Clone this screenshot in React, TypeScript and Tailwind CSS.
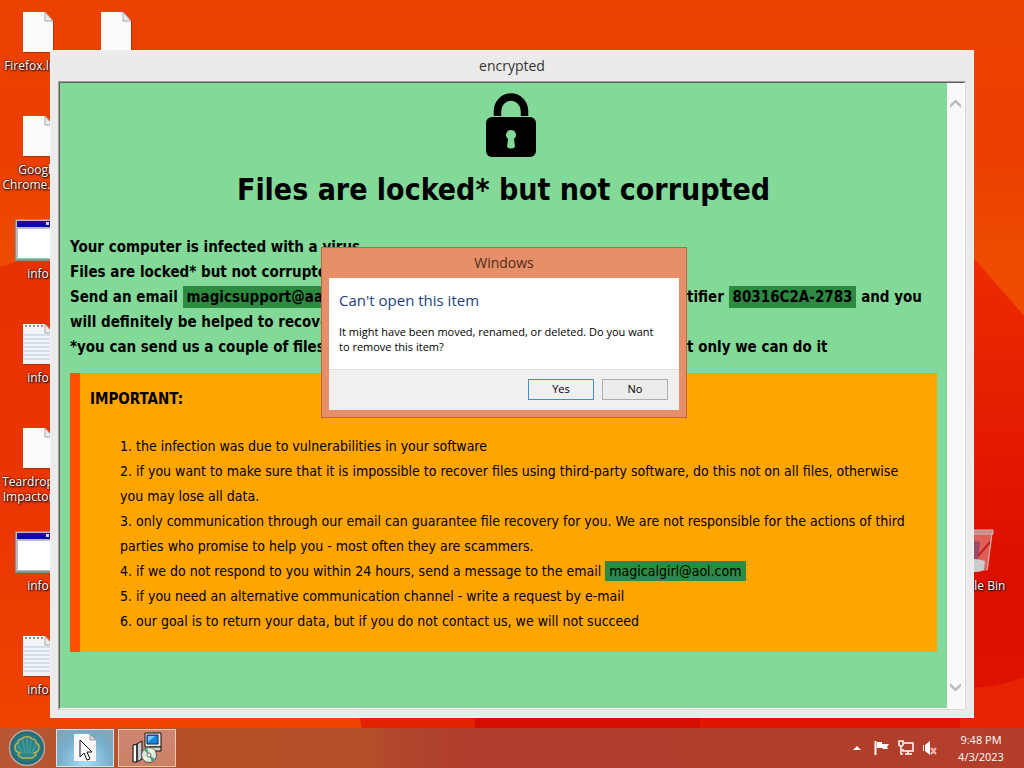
import { ReactNode } from 'react';

const rules = [
  'the infection was due to vulnerabilities in your software',
  'if you want to make sure that it is impossible to recover files using third-party software, do this not on all files, otherwise you may lose all data.',
  'only communication through our email can guarantee file recovery for you. We are not responsible for the actions of third parties who promise to help you - most often they are scammers.',
  'if we do not respond to you within 24 hours, send a message to the email',
  'if you need an alternative communication channel - write a request by e-mail',
  'our goal is to return your data, but if you do not contact us, we will not succeed',
];

function Wallpaper() {
  return (
    <svg className="absolute inset-0 h-full w-full" viewBox="0 0 1024 768" preserveAspectRatio="none" aria-hidden="true">
      <defs>
        <linearGradient id="sky" x1="0" y1="0" x2="0" y2="1">
          <stop offset="0" stopColor="#ec4200" />
          <stop offset="0.2" stopColor="#eb3e00" />
          <stop offset="0.35" stopColor="#ee4d00" />
          <stop offset="1" stopColor="#f04a00" />
        </linearGradient>
        <linearGradient id="fold" x1="0" y1="0" x2="0" y2="1">
          <stop offset="0" stopColor="#ee2c00" />
          <stop offset="0.6" stopColor="#dd1000" />
          <stop offset="1" stopColor="#dc1200" />
        </linearGradient>
        <linearGradient id="left" x1="0" y1="0" x2="0" y2="1">
          <stop offset="0" stopColor="#e63200" />
          <stop offset="0.5" stopColor="#ea3600" />
          <stop offset="1" stopColor="#f04600" />
        </linearGradient>
      </defs>
      <rect width="1024" height="768" fill="url(#sky)" />
      <path d="M0 267L60 245V718H200V768H0Z" fill="url(#left)" />
      <path d="M960 242L1024 316V768H960Z" fill="url(#fold)" />
      <path d="M198 710H358L370 768H192Z" fill="#ee4400" />
      <path d="M358 710H476L470 768H370Z" fill="#e32200" />
      <path d="M476 710H700V768H470Z" fill="#d40e00" />
      <path d="M700 710H960V768H700Z" fill="#e01600" />
      <path d="M960 687Q990 690 1024 677V768H960Z" fill="#e62200" />
    </svg>
  );
}

function FilePaper({ lined = false }: { lined?: boolean }) {
  return (
    <svg width="34" height="44" viewBox="0 0 34 44" aria-hidden="true">
      <path d="M3 3h22l8 9v31H3z" fill="#7a2400" opacity=".55" />
      <path d="M2 2h22l8 9v31H2z" fill={lined ? '#f1f5fa' : '#fbfbfb'} />
      <path d="M24 2v9h8z" fill="#ececec" stroke="#a8a8a8" strokeWidth="1" />
      {lined && <path d="M3 13h28M3 17h28M3 21h28M3 25h28M3 29h28M3 33h28M3 37h28" stroke="#b9cbdf" strokeWidth="1" />}
      {lined && <path d="M4 4h20" stroke="#8d9297" strokeWidth="2" strokeDasharray="2 2" />}
    </svg>
  );
}

function AppWindow() {
  return (
    <svg width="46" height="44" viewBox="0 0 46 44" aria-hidden="true">
      <path d="M0 1h46v42H0z" fill="#8d8d96" />
      <path d="M1 2h44v39H1z" fill="#b9bac2" />
      <path d="M2 3h42v6H2z" fill="#0a0ab0" />
      <path d="M31 4h3v3h-3z" fill="#d8d8e8" />
      <path d="M3 11h40v29H3z" fill="#fff" />
    </svg>
  );
}

function DesktopIcon({ label, children }: { label: string; children: ReactNode }) {
  return (
    <li className="flex h-[104px] w-[76px] flex-col items-center gap-1 pt-2.5 text-center text-xs leading-[15px] text-white [text-shadow:1px_1px_2px_#000,0_0_2px_#000]">
      {children}
      <span className="whitespace-pre">{label}</span>
    </li>
  );
}

function RecycleBin() {
  return (
    <svg width="44" height="46" viewBox="0 0 44 46" aria-hidden="true">
      <path d="M4 3h37l-5 39q-14 4-26 0z" fill="#e0a09c" opacity=".55" />
      <path d="M20 12l8 2-2 18-8 2z" fill="#6b3a78" opacity=".6" />
      <path d="M38 14L26 28" stroke="#c02020" strokeWidth="2" />
      <path d="M9 33q13-4 24 0l-1 9q-10 4-21 1z" fill="#c9ccca" />
      <path d="M3 2h38v4H3z" fill="#c98a88" stroke="#c4bcbc" />
      <path d="M40 5l-5 37" stroke="#eab0a8" />
    </svg>
  );
}

function Padlock() {
  return (
    <svg width="50" height="64" viewBox="0 0 50 64" role="img" aria-label="Locked">
      <path d="M11.500 23V18a13.500 14 0 0 1 27 0v5" fill="none" stroke="#000" strokeWidth="7.500" />
      <rect y="24" width="50" height="40" rx="6" />
      <path d="M25 37a5 5 0 0 1 3 9l1 8q-4 3-8 0l1-8a5 5 0 0 1 3-9z" fill="#82d998" />
    </svg>
  );
}

function Mark({ children }: { children: ReactNode }) {
  return <mark className="bg-[#2d8b41] px-1 py-0.5 text-black">{children}</mark>;
}

function NoteLine({ rest, children }: { rest?: ReactNode; children: ReactNode }) {
  return (
    <p className="flex whitespace-nowrap">
      <span className="w-[617px] shrink-0">{children}</span>
      {rest && <span>{rest}</span>}
    </p>
  );
}

function ScrollArrow({ down = false }: { down?: boolean }) {
  return (
    <button type="button" aria-label={down ? 'Scroll down' : 'Scroll up'}>
      <svg width="13" height="9" viewBox="0 0 13 9" aria-hidden="true">
        <path d={down ? 'M1 0l5.500 5L12 0v3.500L6.500 8.500 1 3.500z' : 'M1 9l5.500-5L12 9V5.500L6.500.5 1 5.500z'} fill="#bdbdbd" />
      </svg>
    </button>
  );
}

function EncryptedWindow() {
  return (
    <section className="absolute inset-x-[50px] top-[50px] flex flex-col border border-[#f5eeee] bg-[#ebebeb] px-[7px] pb-[7px]" aria-label="encrypted">
      <h2 className="h-[30px] text-center text-sm leading-[30px] text-[#333]">encrypted</h2>
      <div className="flex border border-t-[#a0a0a0] border-r-[#d8d8d8] border-b-[#d8d8d8] border-l-[#a0a0a0] bg-white">
        <div className="flex min-h-[627px] flex-1 border border-t-[#606060] border-r-white border-b-white border-l-[#606060] bg-[#82d998] font-['DejaVu_Sans_Condensed','DejaVu_Sans',sans-serif] leading-[25px] text-black">
          <div className="min-w-0 flex-1 px-2.5 pt-2.5">
            <div className="flex justify-center pl-[15px]"><Padlock /></div>
            <h1 className="pt-[13px] text-center text-[30px] leading-10 font-bold">Files are locked* but not corrupted</h1>
            <div className="mt-[25px] text-[15px] leading-[25px] font-bold">
              <NoteLine>Your computer is infected with a virus.</NoteLine>
              <NoteLine>Files are locked* but not corrupte</NoteLine>
              <NoteLine rest={<>tifier <Mark>80316C2A-2783</Mark> and you</>}>
                Send an email <Mark>magicsupport@aaa</Mark>
              </NoteLine>
              <NoteLine>will definitely be helped to recove</NoteLine>
              <NoteLine rest="t only we can do it">*you can send us a couple of files</NoteLine>
            </div>
            <div className="mt-[13px] border-l-10 border-[#ff4f00] bg-[#ffa500] pt-3.5 pb-[18px] pl-2.5">
              <p className="text-[15px] leading-[25px] font-bold">IMPORTANT:</p>
              <ol className="mt-[22px] list-inside list-decimal pr-3 pl-[30px] text-sm leading-[25px]">
                {rules.map((rule, i) => (
                  <li key={rule}>
                    {rule}
                    {i === 3 && <> <Mark>magicalgirl@aol.com</Mark></>}
                  </li>
                ))}
              </ol>
            </div>
          </div>
          <div className="flex w-[17px] flex-col items-center justify-between bg-[#f9f9f9] py-4">
            <ScrollArrow />
            <ScrollArrow down />
          </div>
        </div>
      </div>
    </section>
  );
}

function MissingItemDialog() {
  return (
    <section role="dialog" aria-label="Windows" className="absolute top-[247px] left-[321px] w-[366px] border border-[#bd6443] bg-[#e78f68] px-[7px] pb-[7px]">
      <h2 className="h-[30px] text-center text-sm leading-[30px] text-[#4f2c1c]">Windows</h2>
      <div className="bg-white px-2.5 pt-2.5 pb-3.5">
        <h3 className="text-[15px] leading-6 text-[#1c3f7c]">Can't open this item</h3>
        <p className="mt-3 pr-3 pb-px text-[11px] leading-[15px] text-black">It might have been moved, renamed, or deleted. Do you want to remove this item?</p>
      </div>
      <div className="flex justify-end gap-2 border-t border-[#dfdfdf] bg-[#f0f0f0] px-[11px] pt-[9px] pb-2.5 text-[11px] text-black">
        <button type="button" className="h-[21px] w-[66px] border border-[#3c8fdc] bg-[#f0f0f0]">Yes</button>
        <button type="button" className="h-[21px] w-[66px] border border-[#acacac] bg-[#ececec]">No</button>
      </div>
    </section>
  );
}

function StartShell() {
  return (
    <svg width="38" height="38" viewBox="0 0 38 38" aria-hidden="true">
      <defs>
        <radialGradient id="orb">
          <stop offset="0" stopColor="#4aa6a6" />
          <stop offset="1" stopColor="#1d6472" />
        </radialGradient>
      </defs>
      <circle cx="19" cy="19" r="17.500" fill="url(#orb)" stroke="#b3a69c" strokeWidth="1.500" />
      <path d="M12 24Q7 23 7 18q0-3 3-4 0-4 4-4 2-3 5-2 3-1 5 2 4 0 4 4 3 1 3 4 0 5-5 6l2 2-4 3H14l-4-3z" fill="#2f8288" stroke="#b9b057" strokeWidth="1.500" />
      <path d="M15 25l-5-9M17 24l-2-12M19 24V10M21 24l2-12M23 25l5-9" stroke="#3f9f9f" strokeWidth="1.500" />
    </svg>
  );
}

function InstallerIcon() {
  return (
    <svg width="30" height="32" viewBox="0 0 30 32" aria-hidden="true">
      <path d="M13 1h16v14H13z" fill="#e8e8dc" stroke="#111" />
      <path d="M15 3h11v9H15z" fill="#1487e0" stroke="#0b2a66" />
      <path d="M16 10l7-6h-7z" fill="#7cc9ff" />
      <path d="M17 15h12v4H17z" fill="#d4d4c8" stroke="#111" />
      <path d="M1 13l4-1v18H1zM5 12l5-3v18l-5 3z" fill="#c9c9c9" stroke="#111" />
      <path d="M2 14h2v15H2z" fill="#fff" />
      <circle cx="17" cy="23" r="7.500" fill="#dce8e0" stroke="#555" />
      <path d="M17 23l-5-5 3-2zM17 23l6 4-3 3z" fill="#3fa777" />
      <path d="M17 23l6-4-3-3zM17 23l-6 3 3 3z" fill="#f4f4c9" />
      <circle cx="17" cy="23" r="2" fill="#fff" stroke="#666" />
    </svg>
  );
}

function Taskbar() {
  return (
    <footer className="relative flex h-10 items-center bg-[linear-gradient(90deg,#b95634,#b35026_20%,#b35028_36%,#b3462c_38%,#ae3d2c_47%,#b33f2b)] text-white">
      <button type="button" aria-label="Start" className="ml-2"><StartShell /></button>
      <button type="button" aria-label="encrypted" className="ml-2.5 flex h-[38px] w-[58px] items-center justify-center border border-[#d5e2e8] bg-[radial-gradient(circle_at_50%_90%,#a5e0f8,#77aecb_60%,#8aa0ad)]">
        <svg width="26" height="30" viewBox="0 0 26 30" aria-hidden="true">
          <path d="M2 1h16l6 6v21H2z" fill="#f8f8f8" />
          <path d="M18 1v6h6z" fill="#ddd" stroke="#999" strokeWidth="1" />
          <path d="M8 7v17l4-4 3 7 3-1-3-7h5z" fill="#fff" stroke="#111" strokeWidth="1" />
        </svg>
      </button>
      <button type="button" aria-label="Installer" className="ml-1 flex h-[38px] w-[58px] items-center justify-center border border-[#f3c9a8] bg-[linear-gradient(#cf8672,#cb8068)]">
        <InstallerIcon />
      </button>
      <div className="ml-auto flex items-center gap-2">
        <button type="button" aria-label="Show hidden icons">
          <svg width="10" height="6" viewBox="0 0 10 6"><path d="M1 5l4-4 4 4z" fill="#fff" /></svg>
        </button>
        <svg className="ml-1" width="16" height="16" viewBox="0 0 16 16" role="img" aria-label="Action Center">
          <path d="M1.500 1v14" stroke="#fff" strokeWidth="2" />
          <path d="M3 2h5v2h7l-2 3 1 2H9L8 8H3z" fill="#fff" />
        </svg>
        <svg width="16" height="16" viewBox="0 0 16 16" role="img" aria-label="Network" fill="none" stroke="#fff" strokeWidth="1.500">
          <path d="M6 3h9v8H5V9M7 14h7M10 11v3M1 1v4l1 1h2l1-1V1zM3 6v8h2" />
        </svg>
        <svg width="16" height="16" viewBox="0 0 16 16" role="img" aria-label="Muted">
          <path d="M1 5h1v6H1zM3 5l5-4v14l-5-4z" fill="#fff" />
          <path d="M9 8l5 6M14 8l-5 6" stroke="#ffb5ac" strokeWidth="2" />
        </svg>
      </div>
      <time className="mr-3.5 ml-3.5 w-[58px] text-center text-[11px] leading-[17px]">9:48 PM 4/3/2023</time>
    </footer>
  );
}

export default function App() {
  return (
    <main className="relative flex min-h-screen flex-col overflow-hidden bg-[#ec4200] font-['Open_Sans','Noto_Sans',sans-serif]">
      <Wallpaper />
      <div className="relative flex flex-1 items-start">
        <ul>
          <DesktopIcon label="Firefox.lnk..."><FilePaper /></DesktopIcon>
          <DesktopIcon label={'Google\nChrome.lnk..'}><FilePaper /></DesktopIcon>
          <DesktopIcon label="info"><AppWindow /></DesktopIcon>
          <DesktopIcon label="info"><FilePaper lined /></DesktopIcon>
          <DesktopIcon label={'Teardrop.lnk\nImpactor.lnk'}><FilePaper /></DesktopIcon>
          <DesktopIcon label="info"><AppWindow /></DesktopIcon>
          <DesktopIcon label="info"><FilePaper lined /></DesktopIcon>
        </ul>
        <ul className="ml-0.5">
          <DesktopIcon label=""><FilePaper /></DesktopIcon>
        </ul>
        <ul className="mr-3 ml-auto self-end pb-[106px]">
          <DesktopIcon label="Recycle Bin"><RecycleBin /></DesktopIcon>
        </ul>
        <EncryptedWindow />
        <MissingItemDialog />
      </div>
      <Taskbar />
    </main>
  );
}
